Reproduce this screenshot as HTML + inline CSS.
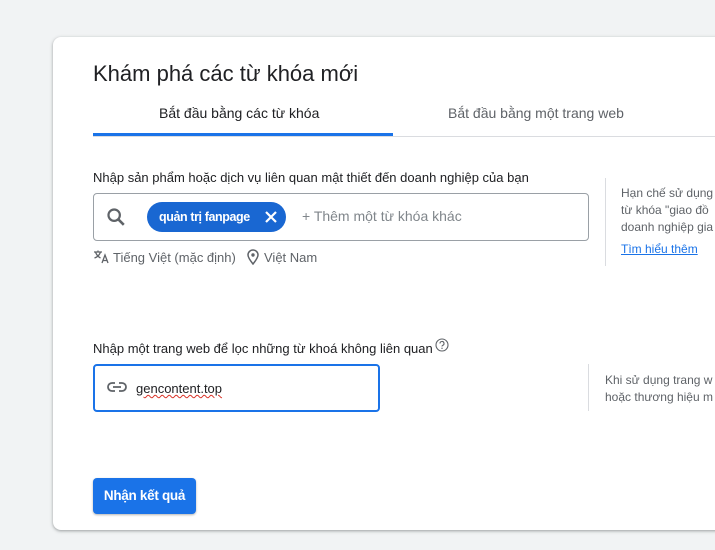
<!DOCTYPE html>
<html><head><meta charset="utf-8"><style>
*{box-sizing:border-box;margin:0;padding:0}
body{width:715px;height:550px;background:#f1f3f4;font-family:"Liberation Sans",Arial,sans-serif;position:relative;overflow:hidden;color:#3c4043}
.card{position:absolute;left:53px;top:37px;width:700px;height:493px;background:#fff;border-radius:8px;box-shadow:0 1px 2px rgba(60,64,67,.3),0 1px 3px 1px rgba(60,64,67,.15)}
.abs{position:absolute;white-space:nowrap}
</style></head><body>
<div class="card"></div>
<div class="abs" style="left:93px;top:61px;font-size:22px;color:#202124">Khám phá các từ khóa mới</div>
<div class="abs" style="left:159px;top:105px;font-size:14px;color:#202124">Bắt đầu bằng các từ khóa</div>
<div class="abs" style="left:448px;top:105px;font-size:14px;color:#5f6368">Bắt đầu bằng một trang web</div>
<div class="abs" style="left:93px;top:136px;width:622px;height:1px;background:#dadce0"></div>
<div class="abs" style="left:93px;top:133px;width:300px;height:3px;background:#1a73e8"></div>

<div class="abs" style="left:93px;top:170px;font-size:13px;color:#202124">Nhập sản phẩm hoặc dịch vụ liên quan mật thiết đến doanh nghiệp của bạn</div>
<div class="abs" style="left:93px;top:193px;width:496px;height:48px;border:1px solid #9aa0a6;border-radius:4px"></div>
<svg class="abs" style="left:105px;top:206px" width="22" height="22" viewBox="0 0 24 24"><circle cx="10" cy="10" r="6.2" fill="none" stroke="#5f6368" stroke-width="2.4"/><path d="M14.5 14.5L20.5 20.5" stroke="#5f6368" stroke-width="2.8"/></svg>
<div class="abs" style="left:147px;top:202px;width:139px;height:30px;background:#1967d2;border-radius:15px;color:#fff;font-weight:bold;font-size:12.5px;letter-spacing:-0.4px;line-height:30px;padding-left:12px">quản trị fanpage</div>
<svg class="abs" style="left:263px;top:209px" width="16" height="16" viewBox="0 0 16 16"><path d="M3 3L13 13M13 3L3 13" stroke="#fff" stroke-width="2.2"/></svg>
<div class="abs" style="left:302px;top:208px;font-size:14px;color:#80868b">+ Thêm một từ khóa khác</div>
<svg class="abs" style="left:93px;top:249px" width="16" height="16" viewBox="0 0 16 16"><path d="M1 3h8M5 1.5v1.5M2.5 3c1 3 3 5 5 6M7.5 3c-1 3-3 5-6 6M9 14l3-8 3 8M10 11.5h4" fill="none" stroke="#5f6368" stroke-width="1.3"/></svg>
<div class="abs" style="left:113px;top:250px;font-size:13px;color:#5f6368">Tiếng Việt (mặc định)</div>
<svg class="abs" style="left:246px;top:249px" width="14" height="16" viewBox="0 0 14 16"><path d="M7 15C3 10 2 8 2 6a5 5 0 0 1 10 0c0 2-1 4-5 9z" fill="none" stroke="#5f6368" stroke-width="1.5"/><circle cx="7" cy="6" r="1.7" fill="#5f6368"/></svg>
<div class="abs" style="left:264px;top:250px;font-size:13px;color:#5f6368">Việt Nam</div>

<div class="abs" style="left:605px;top:178px;width:1px;height:88px;background:#dadce0"></div>
<div class="abs" style="left:621px;top:185px;font-size:12px;line-height:17px;color:#5f6368">Hạn chế sử dụng<br>từ khóa "giao đồ<br>doanh nghiệp gia</div>
<div class="abs" style="left:621px;top:242px;font-size:12px;color:#1a73e8;text-decoration:underline">Tìm hiểu thêm</div>

<div class="abs" style="left:93px;top:341px;font-size:13px;color:#202124">Nhập một trang web để lọc những từ khoá không liên quan</div>
<svg class="abs" style="left:435px;top:338px" width="14" height="14" viewBox="0 0 14 14"><circle cx="7" cy="7" r="6" fill="none" stroke="#5f6368" stroke-width="1.1"/><path d="M5 5.5a2 2 0 1 1 2.6 1.9c-.5.2-.6.5-.6 1.1" fill="none" stroke="#5f6368" stroke-width="1.1"/><circle cx="7" cy="10.3" r=".7" fill="#5f6368"/></svg>
<div class="abs" style="left:93px;top:364px;width:287px;height:48px;border:2px solid #1a73e8;border-radius:4px"></div>
<svg class="abs" style="left:107px;top:381px" width="20" height="12" viewBox="0 0 20 12"><path d="M8 2H5a4 4 0 0 0 0 8h3M12 2h3a4 4 0 0 1 0 8h-3M6 6h8" fill="none" stroke="#5f6368" stroke-width="1.8"/></svg>
<div class="abs" style="left:136px;top:381px;font-size:13px;color:#202124;text-decoration:underline wavy #d93025;text-decoration-thickness:1px">gencontent.top</div>
<div class="abs" style="left:588px;top:364px;width:1px;height:47px;background:#dadce0"></div>
<div class="abs" style="left:605px;top:372px;font-size:12px;line-height:17px;color:#5f6368">Khi sử dụng trang w<br>hoặc thương hiệu m</div>

<div class="abs" style="left:93px;top:478px;width:103px;height:36px;background:#1a73e8;border-radius:4px;box-shadow:0 1px 2px rgba(0,0,0,.3);color:#fff;font-weight:bold;font-size:13.5px;letter-spacing:-0.3px;line-height:36px;text-align:center">Nhận kết quả</div>
</body></html>
